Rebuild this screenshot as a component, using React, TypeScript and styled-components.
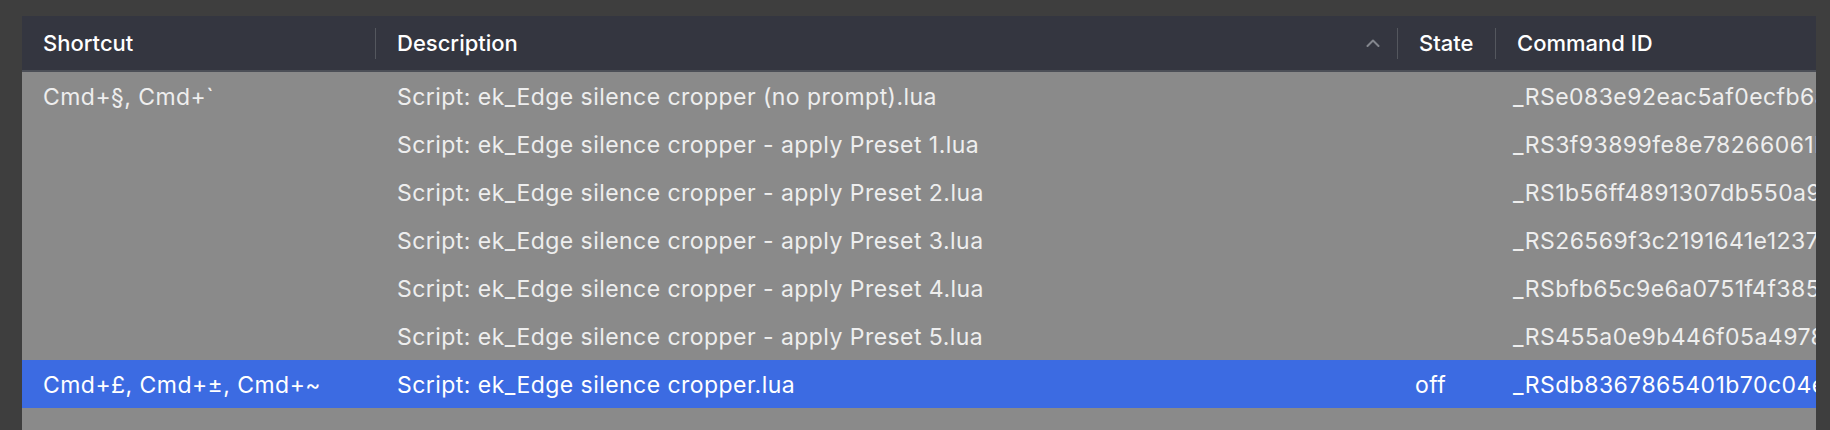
import React from 'react';
import styled, { createGlobalStyle } from 'styled-components';

const GlobalStyle = createGlobalStyle`
    html, body {
        margin: 0;
        padding: 0;
        background: #3e3e3e;
        font-family: Inter, 'Liberation Sans', sans-serif;
    }
`;

const columns = '353px 1022px 98px 1fr';

const Page = styled.div`
    height: 430px;
    padding: 16px 0 0 22px;
    box-sizing: border-box;
    overflow: hidden;
`;

const Table = styled.div`
    width: 1794px;
    height: 414px;
    background: #8a8a8a;
    overflow: hidden;
`;

const Header = styled.div`
    display: grid;
    grid-template-columns: ${columns};
    height: 54px;
    background: #343640;
    border-bottom: 2px solid #4c4f57;
`;

const HeaderCell = styled.div<{ $first?: boolean }>`
    display: flex;
    align-items: center;
    gap: ${(p) => (p.$first ? '0' : '21px')};
    padding-left: ${(p) => (p.$first ? '21px' : '0')};
    color: #ffffff;
    font-size: 22px;
    font-weight: 500;
    white-space: nowrap;
`;

const Divider = styled.span`
    width: 1px;
    height: 31px;
    background: #54575e;
    flex: none;
`;

const SortCaret = styled.svg`
    margin-left: auto;
    margin-right: 17px;
    flex: none;
`;

const Row = styled.div<{ $selected?: boolean }>`
    display: grid;
    grid-template-columns: ${columns};
    height: 48px;
    padding-top: 1px;
    box-sizing: border-box;
    align-items: center;
    background: ${(p) => (p.$selected ? '#3c6be2' : 'transparent')};
    color: ${(p) => (p.$selected ? '#ffffff' : '#eeeeee')};
    font-size: 23px;
    font-weight: 400;
    letter-spacing: 0.45px;
`;

const Cell = styled.div<{ $pad?: number }>`
    padding-left: ${(p) => p.$pad ?? 22}px;
    white-space: nowrap;
    overflow: hidden;
`;

interface Action {
    shortcut: string;
    description: string;
    state: string;
    commandId: string;
    selected?: boolean;
}

const actions: Action[] = [
    { shortcut: 'Cmd+§, Cmd+`', description: 'Script: ek_Edge silence cropper (no prompt).lua', state: '', commandId: '_RSe083e92eac5af0ecfb6a71c2d9' },
    { shortcut: '', description: 'Script: ek_Edge silence cropper - apply Preset 1.lua', state: '', commandId: '_RS3f93899fe8e78266061b0d4e2a' },
    { shortcut: '', description: 'Script: ek_Edge silence cropper - apply Preset 2.lua', state: '', commandId: '_RS1b56ff4891307db550a9c3f18e' },
    { shortcut: '', description: 'Script: ek_Edge silence cropper - apply Preset 3.lua', state: '', commandId: '_RS26569f3c2191641e1237f0ab64' },
    { shortcut: '', description: 'Script: ek_Edge silence cropper - apply Preset 4.lua', state: '', commandId: '_RSbfb65c9e6a0751f4f3852e9d07' },
    { shortcut: '', description: 'Script: ek_Edge silence cropper - apply Preset 5.lua', state: '', commandId: '_RS455a0e9b446f05a4978c1b36fd' },
    { shortcut: 'Cmd+£, Cmd+±, Cmd+~', description: 'Script: ek_Edge silence cropper.lua', state: 'off', commandId: '_RSdb8367865401b70c04e5a2917c', selected: true },
];

const App = () => {
    return (
        <>
            <GlobalStyle />
            <Page>
                <Table>
                    <Header>
                        <HeaderCell $first>Shortcut</HeaderCell>
                        <HeaderCell>
                            <Divider />
                            Description
                            <SortCaret width="14" height="8" viewBox="0 0 14 8">
                                <path d="M1.5 7 L7 1.5 L12.5 7" fill="none" stroke="#83868d" strokeWidth="2" strokeLinecap="round" strokeLinejoin="round" />
                            </SortCaret>
                        </HeaderCell>
                        <HeaderCell>
                            <Divider />
                            State
                        </HeaderCell>
                        <HeaderCell>
                            <Divider />
                            Command ID
                        </HeaderCell>
                    </Header>
                    {actions.map((row, i) => (
                        <Row key={i} $selected={row.selected}>
                            <Cell $pad={21}>{row.shortcut}</Cell>
                            <Cell>{row.description}</Cell>
                            <Cell $pad={18}>{row.state}</Cell>
                            <Cell $pad={18}>{row.commandId}</Cell>
                        </Row>
                    ))}
                </Table>
            </Page>
        </>
    );
};

export default App;
